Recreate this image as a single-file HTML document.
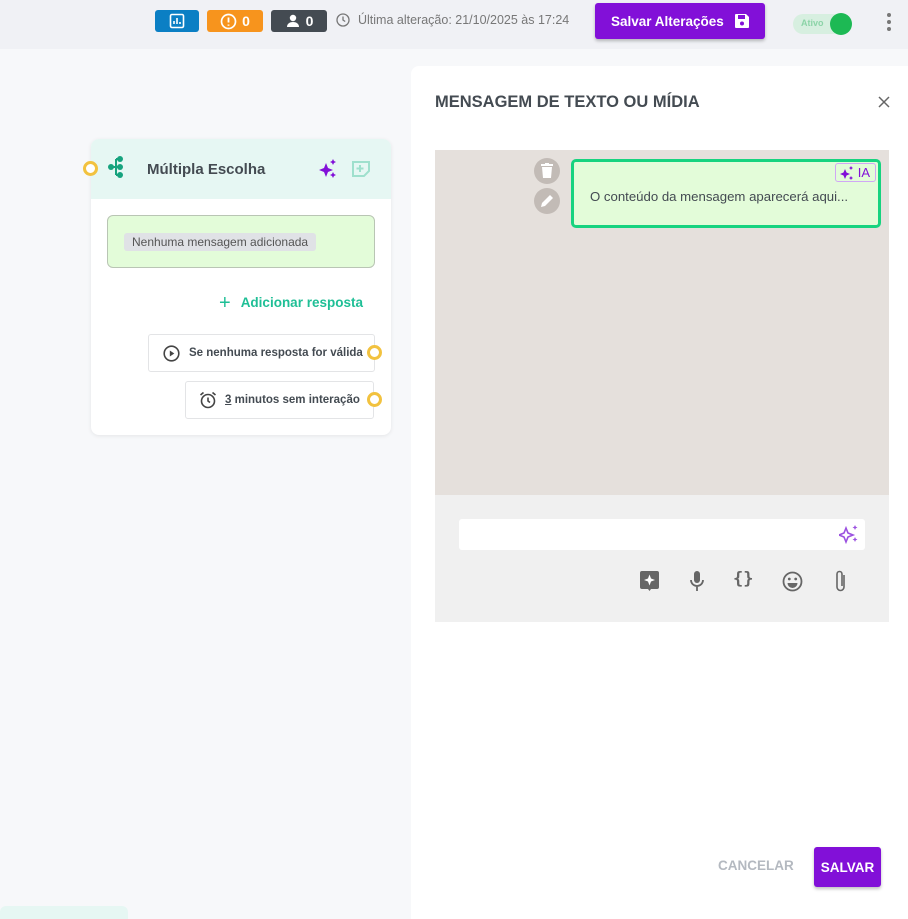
<!DOCTYPE html>
<html><head><meta charset="utf-8"><style>
*{box-sizing:border-box;margin:0;padding:0}
html,body{width:908px;height:919px;overflow:hidden}
body{background:#f7f8fa;font-family:"Liberation Sans",sans-serif;position:relative}
.top{position:absolute;left:0;top:0;width:908px;height:49px;background:#f0f1f5}
.abs{position:absolute}
.badge{position:absolute;top:10px;height:22px;border-radius:3px;color:#fff;font-weight:bold;font-size:14px;display:flex;align-items:center;justify-content:center;gap:5px}
.card{position:absolute;left:91px;top:139px;width:300px;height:296px;background:#fff;border-radius:8px;box-shadow:0 1px 4px rgba(0,0,0,.08);overflow:hidden}
.ring{position:absolute;width:15px;height:15px;border:3px solid #f2c23f;border-radius:50%;background:#fff}
.panel{position:absolute;left:411px;top:66px;width:510px;height:870px;background:#fff;border-radius:8px}
</style></head><body>
<div class="top">
 <div class="badge" style="left:155px;width:44px;background:#0b7fc4"><svg width="16" height="16" viewBox="0 0 16 16"><rect x="1.5" y="1.5" width="13" height="13" rx="1.5" fill="none" stroke="#fff" stroke-width="1.6"/><path d="M5 11V8M8 11V5M11 11V9" stroke="#fff" stroke-width="1.6"/></svg></div>
 <div class="badge" style="left:207px;width:56px;background:#f7941d"><svg width="17" height="17" viewBox="0 0 17 17"><circle cx="8.5" cy="8.5" r="7" fill="none" stroke="#fff" stroke-width="1.7"/><path d="M8.5 4.5v5M8.5 11.5v1.2" stroke="#fff" stroke-width="1.8"/></svg>0</div>
 <div class="badge" style="left:271px;width:56px;background:#444b52"><svg width="16" height="16" viewBox="0 0 16 16"><circle cx="8" cy="5" r="3.2" fill="#fff"/><path d="M2 14c0-3.5 3-5 6-5s6 1.5 6 5z" fill="#fff"/></svg>0</div>
 <svg class="abs" style="left:336px;top:13px" width="14" height="14" viewBox="0 0 14 14"><circle cx="7" cy="7" r="6" fill="none" stroke="#777" stroke-width="1.3"/><path d="M7 3.5V7l2.2 1.5" fill="none" stroke="#777" stroke-width="1.3"/></svg>
 <div class="abs" style="left:358px;top:13px;font-size:12.5px;color:#777">Última alteração: 21/10/2025 às 17:24</div>
 <div class="abs" style="left:595px;top:3px;width:170px;height:36px;background:#8210d8;border-radius:3px;box-shadow:0 2px 3px rgba(0,0,0,.25);color:#fff;font-weight:bold;font-size:13.5px;display:flex;align-items:center;padding-left:16px;gap:10px">Salvar Alterações <svg width="16" height="16" viewBox="0 0 16 16"><path d="M1 2a1 1 0 011-1h10l3 3v10a1 1 0 01-1 1H2a1 1 0 01-1-1z" fill="#fff"/><rect x="4" y="2" width="7" height="4" fill="#8210d8"/><circle cx="8" cy="10.5" r="2" fill="#8210d8"/></svg></div>
 <div class="abs" style="left:793px;top:14px;width:50px;height:20px;background:#d7efe0;border-radius:10px"><span class="abs" style="left:8px;top:4px;font-size:9px;font-weight:bold;color:#8cd4a8">Ativo</span><div class="abs" style="left:37px;top:-1px;width:22px;height:22px;border-radius:50%;background:#1db954"></div></div>
 <div class="abs" style="left:887px;top:13px;width:4px"><div style="width:4px;height:4px;border-radius:50%;background:#777;margin-bottom:3px"></div><div style="width:4px;height:4px;border-radius:50%;background:#777;margin-bottom:3px"></div><div style="width:4px;height:4px;border-radius:50%;background:#777"></div></div>
</div>

<div class="card">
 <div style="height:60px;background:#e6f7f3;position:relative">
  <svg class="abs" style="left:16px;top:17px" width="18" height="22" viewBox="0 0 18 22"><circle cx="4" cy="11" r="3" fill="#16a37e"/><circle cx="13" cy="3" r="3" fill="#16a37e"/><circle cx="13" cy="11" r="3" fill="#16a37e"/><circle cx="13" cy="19" r="3" fill="#16a37e"/><path d="M4 11h9M9 3v16M9 3h4M9 19h4" stroke="#16a37e" stroke-width="2" fill="none"/></svg>
  <div class="abs" style="left:56px;top:22px;font-size:15px;font-weight:bold;color:#444b52">Múltipla Escolha</div>
  <svg class="abs" style="left:228px;top:20px" width="18" height="20" viewBox="0 0 18 20"><path d="M7 4l2 5 5 2-5 2-2 5-2-5-5-2 5-2z" fill="#8210d8"/><path d="M14 0l1 2 2 1-2 1-1 2-1-2-2-1 2-1zM14 13l1 2 2 1-2 1-1 2-1-2-2-1 2-1z" fill="#8210d8"/></svg>
  <svg class="abs" style="left:261px;top:22px" width="18" height="16" viewBox="0 0 18 16"><path d="M1 1h16v9l-5 5H1z" fill="none" stroke="#9fe0cd" stroke-width="2"/><path d="M8 4v7M4.5 7.5h7" stroke="#9fe0cd" stroke-width="2"/></svg>
 </div>
 <div class="abs" style="left:16px;top:76px;width:268px;height:53px;background:#e3fcd9;border:1px solid #b9c5b4;border-radius:6px"><div class="abs" style="left:16px;top:17px;background:#e0e2e6;border-radius:3px;padding:2px 8px;font-size:12px;color:#555">Nenhuma mensagem adicionada</div></div>
 <div class="abs" style="left:128px;top:153px;font-size:13.5px;font-weight:bold;color:#1fbf96"><span style="font-size:20px;font-weight:normal;margin-right:10px;vertical-align:-2px">+</span>Adicionar resposta</div>
 <div class="abs" style="left:57px;top:195px;width:227px;height:38px;border:1px solid #e3e4e6;border-radius:3px;font-size:11.5px;font-weight:bold;color:#444b52;display:flex;align-items:center;padding-left:14px;gap:9px"><svg width="17" height="17" viewBox="0 0 17 17"><circle cx="8.5" cy="8.5" r="7.3" fill="none" stroke="#444" stroke-width="1.6"/><path d="M6.8 5.5v6l4.5-3z" fill="#444"/></svg>Se nenhuma resposta for válida</div>
 <div class="abs" style="left:94px;top:242px;width:189px;height:38px;border:1px solid #e3e4e6;border-radius:3px;font-size:11.5px;font-weight:bold;color:#444b52;display:flex;align-items:center;padding-left:13px;gap:8px"><svg width="18" height="18" viewBox="0 0 18 18"><circle cx="9" cy="10" r="6.5" fill="none" stroke="#444" stroke-width="1.6"/><path d="M9 6.5V10l2 1.5M1.5 4l3-2.5M16.5 4l-3-2.5" fill="none" stroke="#444" stroke-width="1.6"/></svg><span><u>3</u> minutos sem interação</span></div>
</div>
<div class="ring" style="left:83px;top:161px"></div>
<div class="ring" style="left:367px;top:345px"></div>
<div class="ring" style="left:367px;top:392px"></div>
<div class="abs" style="left:0;top:906px;width:128px;height:20px;background:#e6f7f3;border-radius:6px"></div>

<div class="panel">
 <div class="abs" style="left:24px;top:27px;font-size:16.5px;font-weight:bold;color:#444b52">MENSAGEM DE TEXTO OU MÍDIA</div>
 <svg class="abs" style="left:467px;top:30px" width="12" height="12" viewBox="0 0 12 12"><path d="M1 1l10 10M11 1L1 11" stroke="#666" stroke-width="1.5"/></svg>
 <div class="abs" style="left:24px;top:84px;width:454px;height:345px;background:#e5e0dc">
  <div class="abs" style="left:99px;top:8px;width:26px;height:26px;border-radius:50%;background:#c2bbb6"><svg class="abs" style="left:7px;top:5px" width="12" height="15" viewBox="0 0 12 15"><path d="M0 2h12M4 0h4" stroke="#fff" stroke-width="2"/><path d="M1 4h10l-1 11H2z" fill="#fff"/></svg></div>
  <div class="abs" style="left:99px;top:38px;width:26px;height:26px;border-radius:50%;background:#c2bbb6"><svg class="abs" style="left:6px;top:6px" width="14" height="14" viewBox="0 0 14 14"><path d="M1 13l1-4 8-8 3 3-8 8z" fill="#fff"/></svg></div>
  <div class="abs" style="left:136px;top:9px;width:310px;height:69px;background:#e3fcd9;border:3px solid #17d37f;border-radius:5px">
   <div class="abs" style="right:2px;top:1px;height:19px;border:1px solid #d0a7f5;border-radius:3px;padding:0 5px 0 4px;font-size:13px;color:#8210d8;display:flex;align-items:center;gap:4px"><svg width="14" height="14" viewBox="0 0 14 14"><path d="M5 3l1.5 3.5L10 8 6.5 9.5 5 13 3.5 9.5 0 8l3.5-1.5z" fill="#8210d8"/><path d="M11 0l.7 1.3 1.3.7-1.3.7L11 4l-.7-1.3L9 2l1.3-.7zM11 10l.7 1.3 1.3.7-1.3.7L11 14l-.7-1.3L9 12l1.3-.7z" fill="#8210d8"/></svg>IA</div>
   <div class="abs" style="left:16px;top:27px;font-size:13.2px;color:#444b52">O conteúdo da mensagem aparecerá aqui...</div>
  </div>
 </div>
 <div class="abs" style="left:24px;top:429px;width:454px;height:127px;background:#f0f0f0">
  <div class="abs" style="left:24px;top:24px;width:406px;height:31px;background:#fff;border-radius:3px"><svg class="abs" style="left:380px;top:5px" width="20" height="20" viewBox="0 0 20 20"><path d="M7 4l2 5 5 2-5 2-2 5-2-5-5-2 5-2z" fill="none" stroke="#9b51e0" stroke-width="1.6"/><path d="M16 1l.8 1.7 1.7.8-1.7.8L16 6l-.8-1.7-1.7-.8 1.7-.8zM16 13l.8 1.7 1.7.8-1.7.8L16 18l-.8-1.7-1.7-.8 1.7-.8z" fill="#9b51e0"/></svg></div>
  <svg class="abs" style="left:205px;top:76px" width="19" height="20" viewBox="0 0 19 20"><rect width="19" height="18" rx="2" fill="#666"/><path d="M8 18l1.5 2 1.5-2z" fill="#666"/><path d="M9.5 3.5l1.5 4 4 1.5-4 1.5-1.5 4-1.5-4-4-1.5 4-1.5z" fill="#fff"/></svg>
  <svg class="abs" style="left:254px;top:76px" width="16" height="20" viewBox="0 0 16 20"><rect x="5" y="0" width="6" height="12" rx="3" fill="#666"/><path d="M2 9a6 6 0 0012 0M8 15v5" fill="none" stroke="#666" stroke-width="1.8"/></svg>
  <div class="abs" style="left:298px;top:74px;font-size:17px;color:#666;font-weight:bold;font-family:'DejaVu Sans Mono',monospace">{}</div>
  <svg class="abs" style="left:347px;top:76px" width="21" height="21" viewBox="0 0 21 21"><circle cx="10.5" cy="10.5" r="9" fill="none" stroke="#666" stroke-width="1.8"/><circle cx="7.3" cy="8" r="1.4" fill="#666"/><circle cx="13.7" cy="8" r="1.4" fill="#666"/><path d="M5.5 12h10a5 5 0 01-10 0z" fill="#666"/></svg>
  <svg class="abs" style="left:399px;top:74px" width="14" height="25" viewBox="0 0 14 25"><path d="M10 6v12a3.5 3.5 0 01-7 0V5a2.5 2.5 0 015 0v12" fill="none" stroke="#666" stroke-width="1.6"/></svg>
 </div>
 <div class="abs" style="left:307px;top:792px;font-size:13.5px;font-weight:bold;color:#b4b9c0">CANCELAR</div>
 <div class="abs" style="left:403px;top:781px;width:67px;height:40px;background:#8210d8;border-radius:3px;box-shadow:0 2px 3px rgba(0,0,0,.25);color:#fff;font-weight:bold;font-size:13.5px;display:flex;align-items:center;justify-content:center">SALVAR</div>
</div>
</body></html>
